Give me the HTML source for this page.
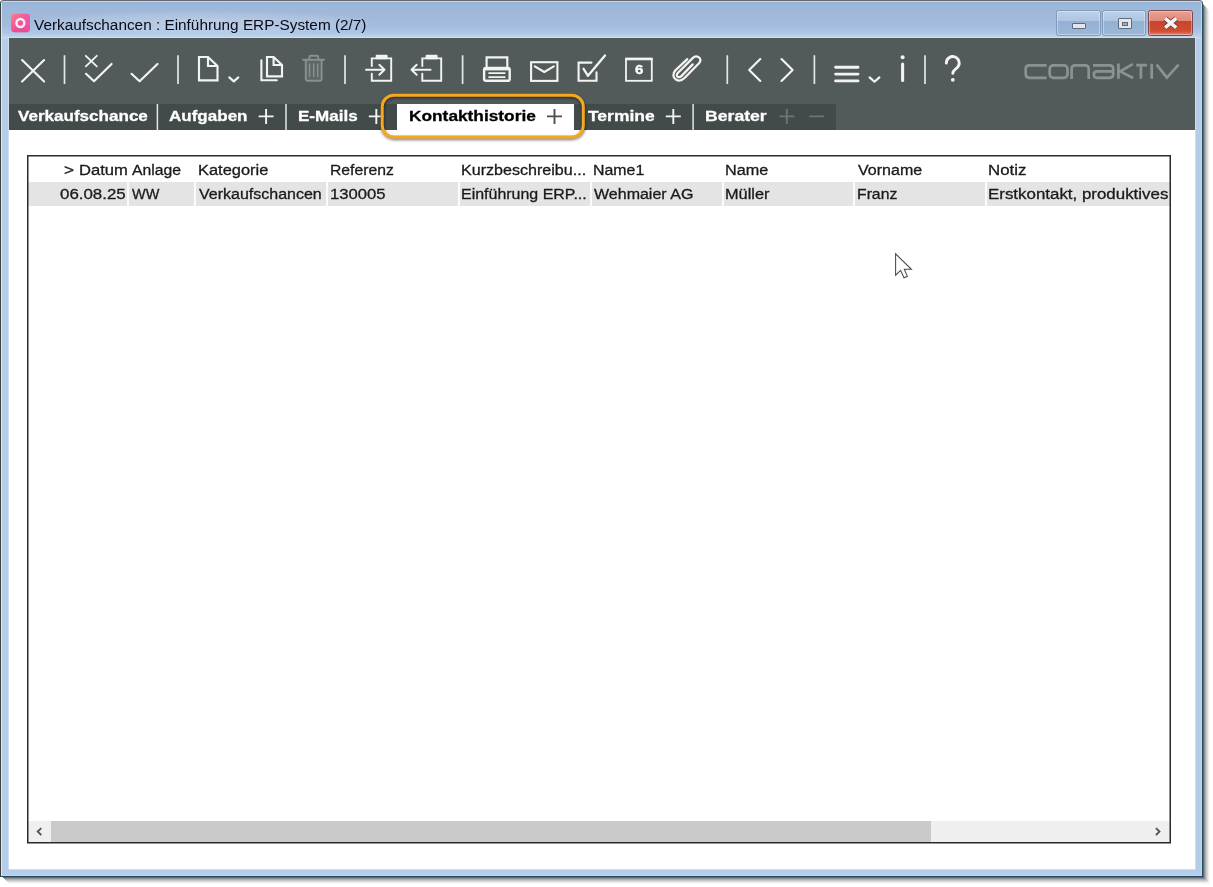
<!DOCTYPE html>
<html><head><meta charset="utf-8"><title>Verkaufschancen</title>
<style>
html,body{margin:0;padding:0;background:#fff;}
body{width:1213px;height:887px;position:relative;overflow:hidden;font-family:"Liberation Sans",sans-serif;}
.t{position:absolute;transform-origin:0 0;-webkit-text-stroke:.3px currentColor;white-space:pre;line-height:20px;font-family:"Liberation Sans",sans-serif;}
#shadow{position:absolute;left:2px;top:2px;width:1201px;height:875px;border-radius:3px 4px 0 0;box-shadow:1px 1px 0 #686669,2px 2px 0 #908d96,3px 3px 0 #aeb0ad,4px 4px 0 #c5c5c5,5px 5px 0 #dbdbdb,6px 6px 0 #eeeeee,7px 7px 0 #fafafa;}
#win{position:absolute;left:0;top:0;width:1203px;height:877px;box-sizing:border-box;
 border:1px solid;border-color:#6a6771 #20505c #1f4e5a #3c4142;background:#b6cdea;border-radius:3.5px 4px 0 0;overflow:hidden;}
#hl{position:absolute;left:0;top:0;right:0;bottom:0;box-sizing:border-box;border:1px solid;border-color:#c9d6e8 #a9e3f3 #a5e2f2 #dde7f4;border-radius:2.5px 3px 0 0;}
#title{position:absolute;left:1px;top:1.2px;right:1px;height:36.4px;
 background:linear-gradient(to bottom,#93b5d7 0px,#9db8da 4px,#a0b8da 12px,#a2bcdb 23px,#adc4e7 30px,#b3cfe4 33px,#c4d5f3 35.5px);}
#glow{position:absolute;left:24px;top:10px;width:350px;height:24px;border-radius:12px;
 background:radial-gradient(ellipse at center,rgba(255,255,255,.28) 0%,rgba(255,255,255,.12) 55%,rgba(255,255,255,0) 75%);}
.cb{position:absolute;top:9px;height:25.5px;box-sizing:border-box;border:1px solid #839bbb;border-radius:2.5px;
 background:linear-gradient(to bottom,#bdd0e8 0,#aec6e2 10px,#93b1d4 10.5px,#9cb8d8 100%);box-shadow:inset 0 0 0 1px rgba(255,255,255,.35);}
#btn-min{left:1055.4px;width:44.5px;}
#btn-max{left:1101.4px;width:44px;}
#btn-close{left:1147.3px;width:45px;border-color:#7a4a52;background:linear-gradient(to bottom,#e8a090 0,#e08a7a 10px,#c8452c 10.5px,#cf4d33 20px,#e08070 100%);}
#btn-min i{position:absolute;left:15px;top:12.4px;width:14px;height:5.6px;box-sizing:border-box;background:#e6e6e6;border:1px solid #5c6b82;border-radius:1px;}
#btn-max i{position:absolute;left:15px;top:7.4px;width:14px;height:10.8px;box-sizing:border-box;background:#e6e6e6;border:1px solid #5c6b82;border-radius:1px;}
#btn-max i:after{content:"";position:absolute;left:3px;top:2.6px;width:6px;height:3.6px;box-sizing:border-box;background:#8fb0d6;border:1px solid #5c6b82;}
#client{position:absolute;left:7.6px;top:37px;width:1186px;height:831px;background:#fff;overflow:hidden;box-shadow:0 0 0 .8px #d4e0f0;}
#toolbar{position:absolute;left:0;top:0;width:100%;height:92px;background:#535b5a;}
#tabs{position:absolute;left:0;top:66px;width:827.3px;height:26px;background:#434a4a;}
#tab-active{position:absolute;left:388.2px;top:66.2px;width:177.3px;height:30px;background:#fff;}
#row{position:absolute;left:28px;top:181.8px;width:1141.5px;height:24.4px;background:#e4e4e4;}
.cs{position:absolute;top:157px;width:2px;height:49.3px;background:rgba(255,255,255,.85);}
#sb{position:absolute;left:28px;top:820.5px;width:1141.5px;height:21.3px;background:#efefef;}
#thumb{position:absolute;left:23px;top:0;width:880px;height:100%;background:#cacaca;}
#clip9{position:absolute;left:0;top:0;width:1169px;height:887px;overflow:hidden;}
#six{left:634.7px;top:59.6px;font-size:13.6px;transform:scaleX(1.12);font-weight:700;color:#fff;}
svg#ov{position:absolute;left:0;top:0;}

</style></head>
<body>
<div id="shadow"></div>
<div id="win"><div id="hl"></div><div id="title"></div><div id="glow"></div>
<div id="btn-min" class="cb"><i></i></div><div id="btn-max" class="cb"><i></i></div><div id="btn-close" class="cb"></div>
<div id="client"><div id="toolbar"></div><div id="tabs"></div><div id="tab-active"></div></div>
</div>
<div id="row"></div>
<div class="cs" style="left:127.0px"></div>
<div class="cs" style="left:194.0px"></div>
<div class="cs" style="left:326.0px"></div>
<div class="cs" style="left:458.0px"></div>
<div class="cs" style="left:590.0px"></div>
<div class="cs" style="left:722.0px"></div>
<div class="cs" style="left:853.0px"></div>
<div class="cs" style="left:985.0px"></div>
<div id="sb"><div id="thumb"></div></div>
<div class="t" style="left:63.74px;top:159.64px;font-size:14.9px;font-weight:400;transform:scaleX(1.15);color:#1a1a1a;">></div>
<div class="t" style="left:79.31px;top:159.64px;font-size:14.9px;font-weight:400;transform:scaleX(1.1138);color:#1a1a1a;">Datum</div>
<div class="t" style="left:131.90px;top:159.64px;font-size:14.9px;font-weight:400;transform:scaleX(1.0579);color:#1a1a1a;">Anlage</div>
<div class="t" style="left:197.82px;top:159.64px;font-size:14.9px;font-weight:400;transform:scaleX(1.1028);color:#1a1a1a;">Kategorie</div>
<div class="t" style="left:329.98px;top:159.64px;font-size:14.9px;font-weight:400;transform:scaleX(1.0564);color:#1a1a1a;">Referenz</div>
<div class="t" style="left:461.35px;top:159.64px;font-size:14.9px;font-weight:400;transform:scaleX(1.0799);color:#1a1a1a;">Kurzbeschreibu...</div>
<div class="t" style="left:592.97px;top:159.64px;font-size:14.9px;font-weight:400;transform:scaleX(1.0674);color:#1a1a1a;">Name1</div>
<div class="t" style="left:725.14px;top:159.64px;font-size:14.9px;font-weight:400;transform:scaleX(1.0887);color:#1a1a1a;">Name</div>
<div class="t" style="left:858.10px;top:159.64px;font-size:14.9px;font-weight:400;transform:scaleX(1.0763);color:#1a1a1a;">Vorname</div>
<div class="t" style="left:988.19px;top:159.64px;font-size:14.9px;font-weight:400;transform:scaleX(1.1312);color:#1a1a1a;">Notiz</div>
<div class="t" style="left:60.03px;top:183.94px;font-size:14.9px;font-weight:400;transform:scaleX(1.133);color:#1a1a1a;">06.08.25</div>
<div class="t" style="left:131.90px;top:183.94px;font-size:14.9px;font-weight:400;transform:scaleX(0.9714);color:#1a1a1a;">WW</div>
<div class="t" style="left:199.20px;top:183.94px;font-size:14.9px;font-weight:400;transform:scaleX(1.0746);color:#1a1a1a;">Verkaufschancen</div>
<div class="t" style="left:329.90px;top:183.94px;font-size:14.9px;font-weight:400;transform:scaleX(1.1162);color:#1a1a1a;">130005</div>
<div class="t" style="left:461.36px;top:183.94px;font-size:14.9px;font-weight:400;transform:scaleX(1.0719);color:#1a1a1a;">Einführung ERP...</div>
<div class="t" style="left:594.30px;top:183.94px;font-size:14.9px;font-weight:400;transform:scaleX(1.0751);color:#1a1a1a;">Wehmaier AG</div>
<div class="t" style="left:725.13px;top:183.94px;font-size:14.9px;font-weight:400;transform:scaleX(1.0949);color:#1a1a1a;">Müller</div>
<div class="t" style="left:856.78px;top:183.94px;font-size:14.9px;font-weight:400;transform:scaleX(1.0583);color:#1a1a1a;">Franz</div>
<div id="clip9"><div class="t" style="left:988.18px;top:183.94px;font-size:14.9px;font-weight:400;transform:scaleX(1.135);color:#1a1a1a;">Erstkontakt, produktives</div></div>
<div class="t" style="left:17.92px;top:105.80px;font-size:15.0px;font-weight:700;transform:scaleX(1.1366);color:#fff;">Verkaufschance</div>
<div class="t" style="left:169.03px;top:105.80px;font-size:15.0px;font-weight:700;transform:scaleX(1.1351);color:#fff;">Aufgaben</div>
<div class="t" style="left:297.66px;top:105.80px;font-size:15.0px;font-weight:700;transform:scaleX(1.1353);color:#fff;">E-Mails</div>
<div class="t" style="left:587.61px;top:105.80px;font-size:15.0px;font-weight:700;transform:scaleX(1.1646);color:#fff;">Termine</div>
<div class="t" style="left:705.13px;top:105.80px;font-size:15.0px;font-weight:700;transform:scaleX(1.1746);color:#fff;">Berater</div>
<div class="t" style="left:408.65px;top:105.80px;font-size:15.0px;font-weight:700;transform:scaleX(1.153);color:#000;">Kontakthistorie</div>
<div class="t" style="left:33.65px;top:14.53px;font-size:15.2px;font-weight:400;transform:scaleX(1.0098);color:#0a0a14;-webkit-text-stroke:0;">Verkaufschancen : Einführung ERP-System (2/7)</div>
<div class="t" id="six">6</div>
<svg id="ov" width="1213" height="887" viewBox="0 0 1213 887">
<defs>
<filter id="osh" x="-10%" y="-30%" width="120%" height="170%"><feGaussianBlur stdDeviation="1.6"/></filter>
<linearGradient id="ig" x1="0" y1="0" x2="1" y2="1"><stop offset="0" stop-color="#ff7f8e"/><stop offset=".5" stop-color="#f0508e"/><stop offset="1" stop-color="#e8267c"/></linearGradient>
<linearGradient id="ig2" x1="0" y1="0" x2="1" y2="0"><stop offset="0" stop-color="#f06ab8" stop-opacity="0"/><stop offset="1" stop-color="#f06ab8" stop-opacity=".55"/></linearGradient>
</defs>
<!-- table frame -->
<rect x="27.75" y="155.75" width="1142.5" height="687" fill="none" stroke="#2a2a2a" stroke-width="1.5"/>
<!-- scrollbar arrows -->
<g fill="none" stroke="#505050" stroke-width="1.8">
<path d="M41.3,828.2 L37.7,831.6 L41.3,835"/>
<path d="M1155.9,828.2 L1159.5,831.6 L1155.9,835"/>
</g>
<!-- app icon -->
<rect x="11.1" y="13.7" width="18.8" height="18.5" rx="3.4" fill="url(#ig)"/><rect x="11.1" y="13.7" width="18.8" height="18.5" rx="3.4" fill="url(#ig2)"/>
<circle cx="20.4" cy="23" r="3.95" fill="none" stroke="#fdeef4" stroke-width="2.45"/>
<!-- close X -->
<g stroke-linecap="butt">
<path d="M1165.2,18.4 L1176.2,27.6 M1176.2,18.4 L1165.2,27.6" stroke="#6b3434" stroke-width="5.2"/>
<path d="M1165.2,18.4 L1176.2,27.6 M1176.2,18.4 L1165.2,27.6" stroke="#f4f4f4" stroke-width="3.7"/>
</g>
<!-- tab separators + plus signs -->
<g stroke="#e4e6e6" stroke-width="1.5">
<path d="M157.4,104 V130 M286,104 V130 M693.1,104 V130"/>
</g>
<g stroke="#f4f4f4" stroke-width="1.9">
<path d="M258.6,116.4 H273.6 M266.1,108.9 V123.9"/>
<path d="M368.8,116.4 H383.8 M376.3,108.9 V123.9"/>
<path d="M665.8,116.4 H680.8 M673.3,108.9 V123.9"/>
</g>
<g stroke="#4e4e4e" stroke-width="1.9"><path d="M547,116.4 H562 M554.5,108.9 V123.9"/></g>
<g stroke="#6d7473" stroke-width="1.9"><path d="M779.3,116.4 H794.3 M786.8,108.9 V123.9 M809.2,116.4 H824.2"/></g>
<!-- orange highlight -->
<rect x="382.6" y="96.8" width="201" height="41.6" rx="11.5" fill="none" stroke="#000" stroke-opacity=".55" stroke-width="3" filter="url(#osh)"/>
<rect x="382.2" y="95.2" width="201.1" height="41.9" rx="11.5" fill="none" stroke="#f5a81c" stroke-width="3"/>
<!-- toolbar separators -->
<g stroke="#e3e7e6" stroke-width="1.7">
<path d="M64.5,55.3 V84 M178,55.3 V84 M345,55.3 V84 M462.6,55.3 V84 M727.3,55.3 V84 M814.4,55.3 V84 M925,55.3 V84"/>
</g>
<!-- toolbar icons -->
<g fill="none" stroke="#f3f3f3" stroke-width="2.15" stroke-linecap="round" stroke-linejoin="round">
<path d="M22.1,60.1 L44.1,81.5 M44.1,60.1 L22.1,81.5"/>
<path d="M85.8,55.8 L96.8,66.4 M96.8,55.8 L85.8,66.4" stroke-width="1.8"/>
<path d="M86,73.8 L94,81.2 L111.6,63.9"/>
<path d="M131.5,73.8 L139.6,81.2 L157.5,63.9"/>
<!-- file -->
<path d="M199,57 H208 L217.5,66 V80.4 H199 Z M208,57 V66 H217.5" stroke-linejoin="miter"/>
<path d="M229.3,77.4 L233.8,81.4 L238.3,77.4"/>
<!-- copy -->
<path d="M261.4,60.2 V80.2 H276.8" stroke-linejoin="miter"/>
<path d="M267,57 H273.6 L282,65 V76.4 H267 Z M273.6,57 V65 H282" stroke-linejoin="miter"/>
<!-- clipboard in -->
<path d="M371.8,66 V58.4 H391.2 V80.7 H371.8 V73.6" stroke-linejoin="miter" stroke-width="1.9"/>
<path d="M366,69.8 H384 M379.3,64.8 L384.5,69.8 L379.3,74.8" stroke-width="1.9"/>
<!-- clipboard out -->
<path d="M422.3,66 V58.4 H441.2 V80.7 H422.3 V73.6" stroke-linejoin="miter" stroke-width="1.9"/>
<path d="M430.6,69.8 H412 M416.7,64.8 L411.5,69.8 L416.7,74.8" stroke-width="1.9"/>
<!-- printer -->
<path d="M486.6,67.4 V57.3 H507.3 V67.4" stroke-linejoin="miter" stroke-linecap="butt"/>
<rect x="484.1" y="68" width="25.6" height="12.8" rx="1.8" stroke-width="2.4"/>
<path d="M484.5,69.5 H509.5" stroke-width="1.8" stroke-linecap="butt"/>
<path d="M488.4,73.1 H505.4 M488.4,77.1 H505.4" stroke-width="1.7" stroke-linecap="butt"/>
<!-- envelope -->
<rect x="531.1" y="62.2" width="26.3" height="18.7" stroke-width="2.1" stroke-linejoin="miter"/>
<path d="M534.8,66.4 L544.3,72 L553.8,66.4"/>
<!-- checkbox -->
<path d="M596.5,72.4 V80.7 H578.6 V62.6 H591.5" stroke-linejoin="miter" stroke-width="2.1"/>
<path d="M583.6,68.8 L588,75.8 L605,55.4" stroke-width="2.3"/>
<!-- calendar -->
<rect x="626" y="59.2" width="25.8" height="21.6" stroke-width="1.8" stroke-linejoin="miter"/>
<path d="M625.2,58.9 H652.6" stroke-width="2.6" stroke-linecap="butt"/>
<!-- paperclip -->
<path d="M687.3,59.1 L675.6,70.1 C672.4,73.4 672.8,77.6 675.9,79.5 C679,81.4 682.2,80.4 684.8,77.8 L699,63.3 C701.3,60.7 700.6,58 698.4,57 C696.3,56 694.4,56.5 692.9,57.9 L677.8,73 C676.3,74.6 676.6,76.2 677.9,76.9 C679.3,77.6 680.5,77 681.6,75.9 L692.7,64.4" stroke-width="2.25"/>
<!-- nav -->
<path d="M760.3,59.1 L749.2,70 L760.3,80.9"/>
<path d="M781.5,59.1 L792.6,70 L781.5,80.9"/>
<!-- hamburger -->
<path d="M835.6,67.3 H858 M835.6,74.1 H858 M835.6,80.9 H858" stroke-width="2.9"/>
<path d="M869.6,77.4 L874.5,81.7 L879.4,77.4"/>
<!-- i -->
<path d="M902.6,64 V80.5" stroke-width="3.1"/>
<!-- ? -->
<path d="M946.3,63.2 A6.45,6.45 0 1 1 957.3,67.6 C955,69.6 952.8,70.4 952.8,73.4" stroke-width="2.8"/>
</g>
<circle cx="902.6" cy="57.3" r="2" fill="#f3f3f3"/>
<circle cx="952.8" cy="79.8" r="1.9" fill="#f3f3f3"/>
<g fill="#f3f3f3"><rect x="375.7" y="54.7" width="11.9" height="4.6" rx="1"/><rect x="425.6" y="54.7" width="12" height="4.6" rx="1"/></g>
<!-- trash (disabled) -->
<g fill="none" stroke="#889190" stroke-width="1.9" stroke-linejoin="round">
<path d="M305.8,59.8 V79.3 Q305.8,80.8 307.3,80.8 H320.1 Q321.6,80.8 321.6,79.3 V59.8" fill="#fff" fill-opacity=".07"/>
<path d="M302.4,59.8 H324.8 M309.4,59.8 V57 Q309.4,55.8 310.6,55.8 H317 Q318.2,55.8 318.2,57 V59.8"/>
<path d="M309.6,63.4 V77 M313.7,63.4 V77 M317.7,63.4 V77" stroke-width="1.5"/>
</g>
<!-- logo -->
<g fill="none" stroke="#8b9392" stroke-width="2.7" stroke-linejoin="round">
<path d="M1046.6,65.3 H1029.4 Q1025.7,65.3 1025.7,68.8 V74.3 Q1025.7,77.8 1029.4,77.8 H1046.6"/>
<rect x="1049.7" y="65.3" width="17.8" height="12.5" rx="3.6"/>
<path d="M1071.6,79 V68.8 Q1071.6,65.3 1075.3,65.3 H1085 Q1088.7,65.3 1088.7,68.8 V79"/>
<path d="M1093,65.3 H1109.6 Q1113.2,65.3 1113.2,68.8 V74.3 Q1113.2,77.8 1109.6,77.8 H1097 Q1093.8,77.8 1093.8,74.6 Q1093.8,71.4 1097,71.4 H1113.2"/>
<path d="M1118.4,63.4 V78.8 M1132.8,64.2 L1120.2,71.4 L1133.2,78"/>
<path d="M1136.2,65.1 H1147 M1140.9,65.1 V78.8"/>
<path d="M1151.7,63.8 V78.8"/>
<path d="M1156.6,64.6 L1166.9,77.6 L1178.6,64.6" stroke-linejoin="miter"/>
</g>
<!-- cursor -->
<path d="M895.6,253.8 V275.2 L900.6,270.4 L904,277.8 L907.3,276.4 L904.3,269.3 H911.4 Z" fill="#fff" stroke="#484848" stroke-width="1.05" stroke-linejoin="miter"/>
</svg>

</body></html>
